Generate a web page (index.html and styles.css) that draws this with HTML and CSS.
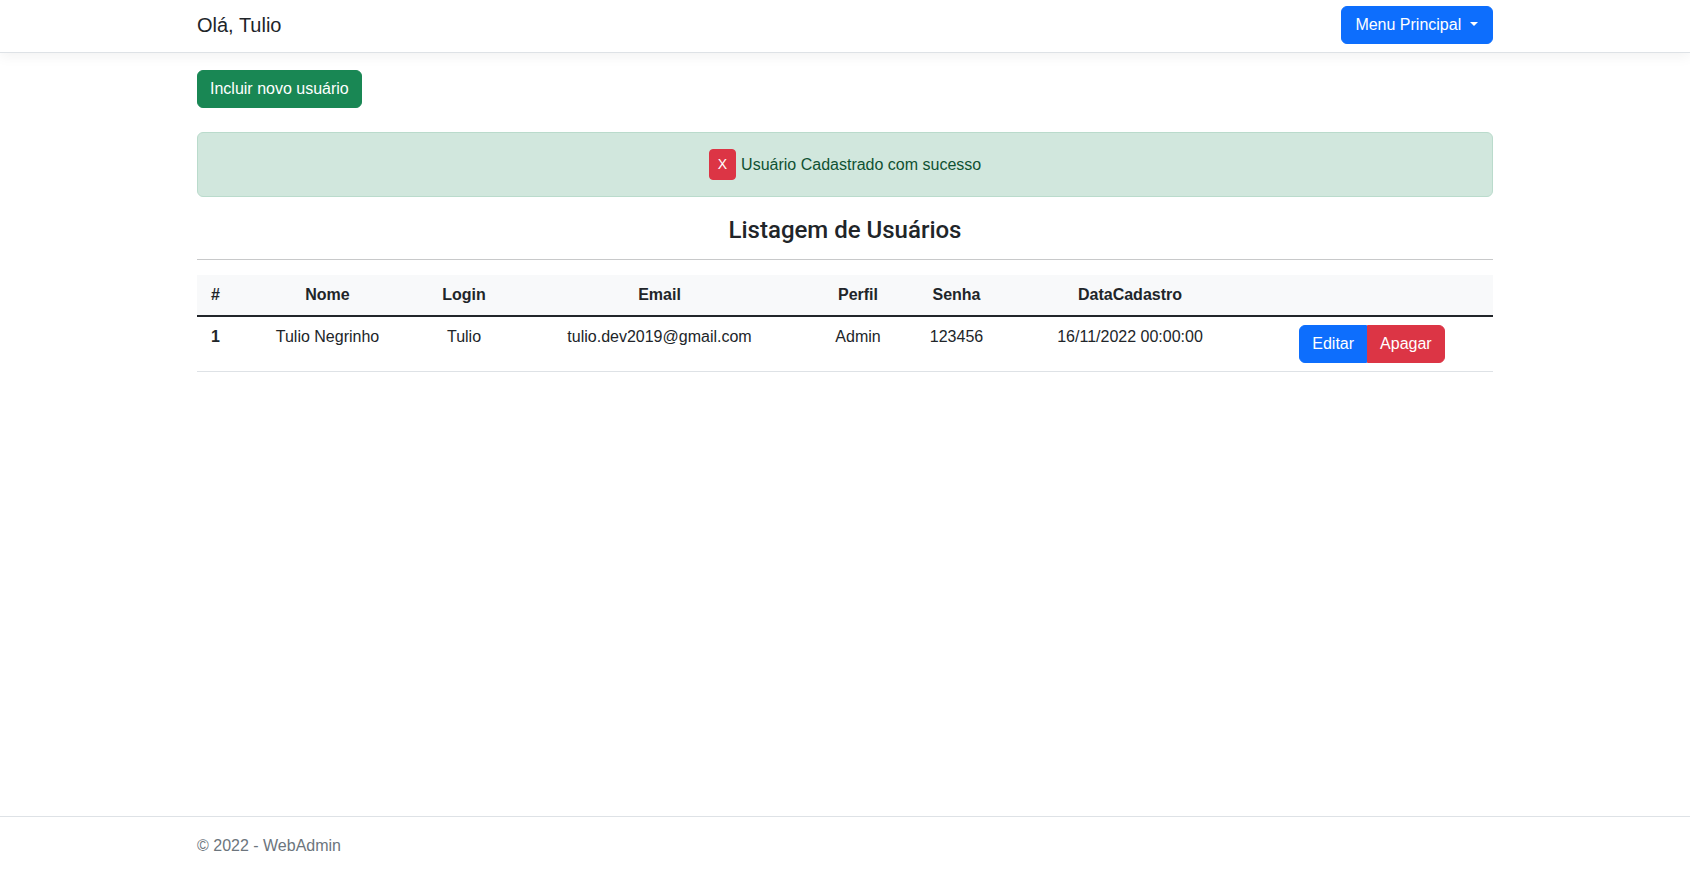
FILE: index.html
```html
<!DOCTYPE html>
<html lang="pt-br">
<head>
<meta charset="utf-8">
<title>WebAdmin - Usuários</title>
<link rel="stylesheet" href="styles.css">
</head>
<body>
<div class="page">
  <header class="navbar">
    <div class="container nav-inner">
      <a class="brand" href="#">Olá, Tulio</a>
      <button class="btn btn-primary dropdown-toggle" type="button">Menu Principal</button>
    </div>
  </header>

  <main class="container main">
    <button class="btn btn-success btn-new" type="button">Incluir novo usuário</button>

    <div class="alert">
      <button class="btn-x" type="button">X</button>
      <span class="alert-text">Usuário Cadastrado com sucesso</span>
    </div>

    <h3 class="title">Listagem de Usuários</h3>
    <hr class="divider">

    <table class="table">
      <colgroup>
        <col class="c-id">
        <col class="c-nome">
        <col class="c-login">
        <col class="c-email">
        <col class="c-perfil">
        <col class="c-senha">
        <col class="c-data">
        <col class="c-acoes">
      </colgroup>
      <thead>
        <tr>
          <th>#</th>
          <th>Nome</th>
          <th>Login</th>
          <th>Email</th>
          <th>Perfil</th>
          <th>Senha</th>
          <th>DataCadastro</th>
          <th></th>
        </tr>
      </thead>
      <tbody>
        <tr>
          <th class="row-id">1</th>
          <td>Tulio Negrinho</td>
          <td>Tulio</td>
          <td>tulio.dev2019@gmail.com</td>
          <td>Admin</td>
          <td>123456</td>
          <td>16/11/2022 00:00:00</td>
          <td>
            <div class="btn-group">
              <a class="btn btn-primary btn-left" href="#">Editar</a>
              <a class="btn btn-danger btn-right" href="#">Apagar</a>
            </div>
          </td>
        </tr>
      </tbody>
    </table>
  </main>

  <footer class="footer">
    <div class="container">© 2022 - WebAdmin</div>
  </footer>
</div>
</body>
</html>
```

FILE: styles.css
```css
* { box-sizing: border-box; }

html, body {
  margin: 0;
  padding: 0;
}

body {
  font-family: "Liberation Sans", Arial, sans-serif;
  font-size: 16px;
  line-height: 1.5;
  color: #212529;
  background: #fff;
}

.page {
  min-height: 100vh;
  display: flex;
  flex-direction: column;
}

.container {
  width: 1296px;
  margin: 0 auto;
}

/* navbar */
.navbar {
  background: #fff;
  border-bottom: 1px solid #dee2e6;
  box-shadow: 0 4px 12px rgba(0, 0, 0, 0.05);
  padding: 6px 0 8px;
}

.nav-inner {
  display: flex;
  align-items: center;
  justify-content: space-between;
  height: 38px;
}

.brand {
  font-size: 20px;
  line-height: 30px;
  color: #212529;
  text-decoration: none;
}

/* buttons */
.btn {
  display: inline-block;
  font-family: inherit;
  font-size: 16px;
  line-height: 24px;
  padding: 6px 12px;
  border: 1px solid transparent;
  border-radius: 6px;
  color: #fff;
  text-decoration: none;
  cursor: pointer;
  text-align: center;
  white-space: nowrap;
}

.btn-primary { background: #0d6efd; border-color: #0d6efd; }
.btn-success { background: #198754; border-color: #198754; }
.btn-danger { background: #dc3545; border-color: #dc3545; }

.dropdown-toggle {
  padding-left: 13px;
  padding-right: 14px;
}

.dropdown-toggle::after {
  content: "";
  display: inline-block;
  margin-left: 0.55em;
  vertical-align: 0.255em;
  border-top: 0.3em solid #fff;
  border-right: 0.3em solid transparent;
  border-left: 0.3em solid transparent;
  border-bottom: 0;
}

/* main */
.main {
  flex: 1;
  padding-top: 17px;
}

.btn-new {
  display: block;
}

.alert {
  margin-top: 24px;
  height: 65px;
  display: flex;
  align-items: center;
  justify-content: center;
  background: #d1e7dd;
  border: 1px solid #badbcc;
  border-radius: 6px;
  color: #0f5132;
}

.btn-x {
  font-family: inherit;
  font-size: 14px;
  line-height: 21px;
  padding: 4px 8px;
  border: 1px solid #dc3545;
  background: #dc3545;
  color: #fff;
  border-radius: 4px;
  margin-right: 5px;
  cursor: pointer;
}

.title {
  margin: 16px 0 0;
  text-align: center;
  font-family: Roboto, "Liberation Sans", sans-serif;
  font-size: 24px;
  font-weight: 500;
  line-height: 34px;
}

.divider {
  margin: 12px 0 0;
  border: 0;
  border-top: 1px solid #c8c9ca;
  height: 0;
}

/* table */
.table {
  width: 100%;
  margin-top: 15px;
  border-collapse: collapse;
  table-layout: fixed;
  vertical-align: top;
}

.c-id { width: 37px; }
.c-nome { width: 187px; }
.c-login { width: 86px; }
.c-email { width: 305px; }
.c-perfil { width: 92px; }
.c-senha { width: 105px; }
.c-data { width: 242px; }
.c-acoes { width: 242px; }

.table th,
.table td {
  padding: 8px;
  text-align: center;
  border-bottom: 1px solid #dee2e6;
}

.table thead th {
  background: #f8f9fa;
  font-weight: 700;
  vertical-align: bottom;
  border-bottom: 2px solid #212529;
}

.table tbody td,
.table tbody th {
  vertical-align: top;
}

.row-id { font-weight: 700; }

.btn-group {
  display: inline-flex;
}

.btn-left {
  border-top-right-radius: 0;
  border-bottom-right-radius: 0;
}

.btn-right {
  border-top-left-radius: 0;
  border-bottom-left-radius: 0;
}

/* footer */
.footer {
  border-top: 1px solid #dee2e6;
  line-height: 58px;
  color: #6c757d;
  white-space: nowrap;
}
```
